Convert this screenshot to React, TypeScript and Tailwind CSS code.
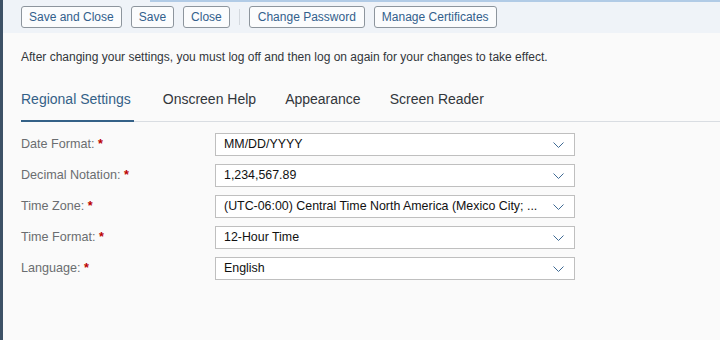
import { ReactNode } from 'react';

const font = { fontFamily: '"Liberation Sans", Arial, sans-serif' };

function ToolbarButton({ children, wide }: { children: ReactNode; wide?: boolean }) {
	return (
		<button
			type="button"
			className={`h-[22px] ${wide ? 'px-[8px]' : 'px-[7px]'} border border-[#8d959d] rounded-[3px] bg-[#fbfcfd] text-[12px] leading-none text-[#32608c]`}
		>
			{children}
		</button>
	);
}

function Chevron() {
	return (
		<svg width="11" height="6" viewBox="0 0 11 6" fill="none">
			<path d="M0.5 0.5L5.5 5.5L10.5 0.5" stroke="#3f6a94" strokeWidth="1" />
		</svg>
	);
}

interface Field {
	label: string;
	value: string;
}

const fields: Field[] = [
	{ label: 'Date Format:', value: 'MM/DD/YYYY' },
	{ label: 'Decimal Notation:', value: '1,234,567.89' },
	{ label: 'Time Zone:', value: '(UTC-06:00) Central Time North America (Mexico City; ...' },
	{ label: 'Time Format:', value: '12-Hour Time' },
	{ label: 'Language:', value: 'English' },
];

const tabs = ['Regional Settings', 'Onscreen Help', 'Appearance', 'Screen Reader'];

export default function App(): JSX.Element {
	return (
		<div className="w-[720px] h-[340px] flex overflow-hidden" style={font}>
			<div className="w-[3px] bg-[#3d5166] shrink-0" />
			<div className="flex-1 flex flex-col bg-[#fafafa]">
				{/* toolbar */}
				<div className="h-[33px] bg-[#eff3f8] flex flex-col">
					<div className="flex h-[2px]">
						<div className="w-[147px]" />
						<div className="flex-1 bg-[#b1cbe6]" />
					</div>
					<div className="flex items-center gap-[9px] pl-[18px] pt-[4px]">
						<ToolbarButton>Save and Close</ToolbarButton>
						<ToolbarButton>Save</ToolbarButton>
						<ToolbarButton>Close</ToolbarButton>
						<div className="w-px h-[16px] bg-[#d3d8de]" />
						<ToolbarButton wide>Change Password</ToolbarButton>
						<ToolbarButton>Manage Certificates</ToolbarButton>
					</div>
				</div>

				<p className="pl-[18px] mt-[17px] text-[12px] leading-[15px] text-[#32363a]">
					After changing your settings, you must log off and then log on again for your changes to take effect.
				</p>

				{/* tabs */}
				<div className="ml-[18px] mt-[25px] flex gap-[29px] border-b border-[#d9dde2]">
					{tabs.map((t, i) => (
						<div
							key={t}
							className={`pb-[12px] text-[14px] leading-[18px] -mb-px border-b-2 ${
								i === 0
									? 'text-[#346187] border-[#346187] pr-[3px]'
									: 'text-[#32363a] border-transparent'
							}`}
						>
							{t}
						</div>
					))}
				</div>

				{/* form */}
				<div className="pl-[18px] mt-[11px] flex flex-col gap-[8px]">
					{fields.map((f) => (
						<div key={f.label} className="flex items-center">
							<div className="w-[194px] text-[12.6px] text-[#6a6d70]">
								{f.label} <span className="text-[#bb0000] font-bold">*</span>
							</div>
							<div className="w-[360px] h-[23px] bg-white border border-[#bfbfbf] flex items-center pl-[8px] pr-[10px]">
								<span className="flex-1 text-[12.4px] text-[#111] truncate">{f.value}</span>
								<Chevron />
							</div>
						</div>
					))}
				</div>
			</div>
		</div>
	);
}
